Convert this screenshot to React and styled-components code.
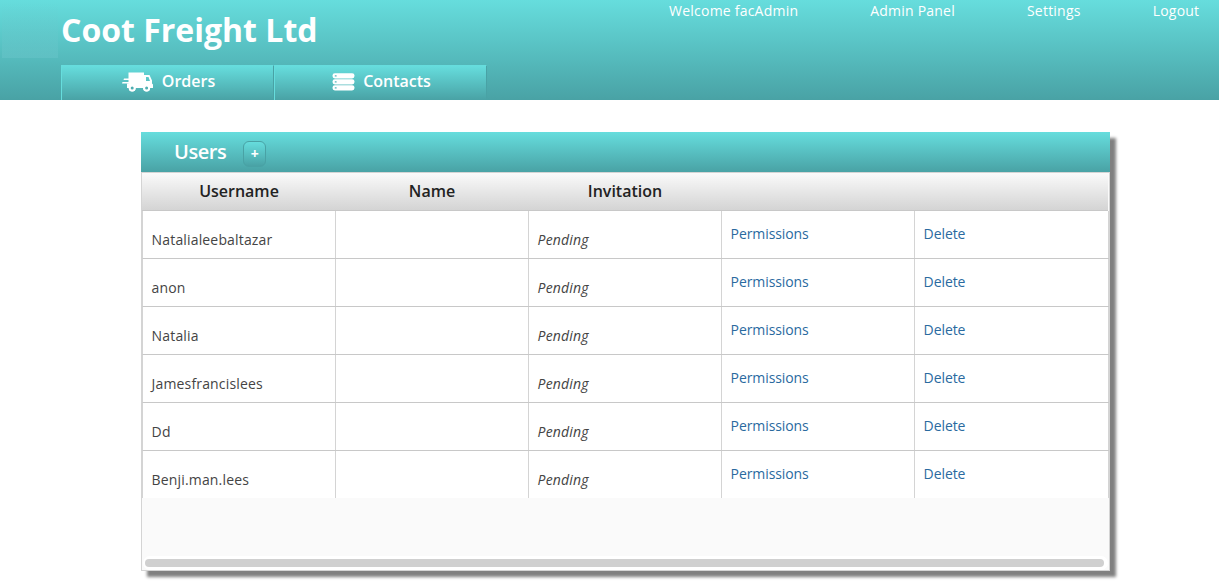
import React from "react";
import styled, { createGlobalStyle } from "styled-components";

const GlobalStyle = createGlobalStyle`
  * { box-sizing: border-box; }
  body {
    margin: 0;
    min-height: 100vh;
    background: #fff;
    color: #444;
    font: 14px/20px "Open Sans", sans-serif;
  }
`;

const teal = "linear-gradient(to bottom, #66dddd 0%, #49a2a5 100%)";

const Header = styled.header`
  display: flex;
  height: 100px;
  background: ${teal};
  color: #fff;
`;
const Logo = styled.div`
  width: 56px;
  height: 56px;
  margin: 2px 3px 0 2px;
  background: linear-gradient(to bottom, rgba(110, 200, 205, 0), rgba(110, 200, 205, 0.4));
`;
const Brand = styled.div`
  display: flex;
  flex-direction: column;
  justify-content: space-between;
`;
const Title = styled.h1`
  margin: 0;
  padding-top: 8px;
  font-size: 32px;
  line-height: 44px;
  font-weight: 700;
`;
const Tabs = styled.nav`
  display: flex;
  height: 35px;
`;
const Tab = styled.a`
  display: flex;
  align-items: center;
  justify-content: center;
  gap: 8px;
  width: 213px;
  padding: 0 0 3px 2px;
  border-top: 1px solid #66dddd;
  border-left: 1px solid #66dddd;
  border-right: 1px solid #49a2a5;
  background: ${teal};
  font-size: 16px;
  font-weight: 600;
`;
const TabLabel = styled.span`
  padding-bottom: 2px;
`;
const TopLinks = styled.nav`
  display: flex;
  gap: 72px;
  margin-left: auto;
  padding: 1px 19.7px 0 0;
  letter-spacing: 0.22px;
`;
const Panel = styled.section`
  display: flex;
  flex-direction: column;
  width: 969px;
  height: 439px;
  margin: 32px 0 0 141px;
  background: #fafafa;
  box-shadow: 6px 6px 3px #808080;
`;
const PanelBar = styled.div`
  display: flex;
  align-items: center;
  gap: 17px;
  height: 40px;
  padding-left: 33px;
  background: ${teal};
  color: #fff;
`;
const PanelTitle = styled.h2`
  margin: 0;
  font-size: 20px;
  line-height: 28px;
  font-weight: 600;
  letter-spacing: -0.45px;
`;
const AddButton = styled.button`
  width: 23px;
  height: 26px;
  margin-top: 4px;
  padding: 0;
  border: 1px solid #49a2a5;
  border-radius: 6px;
  background: ${teal};
  color: #fff;
  font: 700 14px/20px "Open Sans", sans-serif;
`;
const Grid = styled.div`
  display: flex;
  flex: 1;
  flex-direction: column;
  border: 1px solid #d4d4d4;
`;
const HeadRow = styled.div`
  display: grid;
  grid-template-columns: repeat(5, 193px);
  height: 38px;
  margin-right: 1px;
  padding-left: 0.5px;
  border-bottom: 1px solid #c8c8c8;
  background: linear-gradient(to bottom, #fafafa, #d4d4d4);
  color: #222;
  font-size: 16px;
  font-weight: 600;
  line-height: 36px;
  text-align: center;
`;
const Body = styled.div`
  height: 287px;
`;
const Row = styled.div`
  display: grid;
  grid-template-columns: repeat(4, 193px) 194px;
  height: 48px;
  border-left: 1px solid #d4d4d4;
  border-bottom: 1px solid #c8c8c8;
  background: #fff;
  &:last-of-type { border-bottom: 0; height: 47px; }
`;
const Cell = styled.div`
  padding: ${(p) => (p.$link ? 13 : 19)}px 8px 0 8.6px;
  border-right: 1px solid #d4d4d4;
  color: ${(p) => (p.$link ? "#2a6a9f" : "#444")};
  font-style: ${(p) => (p.$italic ? "italic" : "normal")};
  letter-spacing: ${(p) => (p.$link ? -0.09 : 0.16)}px;
`;
const ScrollTrack = styled.div`
  margin: auto 1px 0;
  padding: 3px 4px 3px 2px;
  border-radius: 7px;
  background: #fff;
`;
const ScrollThumb = styled.div`
  height: 8px;
  border-radius: 4px;
  background: #d0d0d0;
`;

const Truck = () => (
  <svg width="32" height="20" viewBox="0 0 32 20" fill="#fff">
    <path fillRule="evenodd" d="M6.500 0.500h15.500v2.500h5.500l2.500 5.500v3l1 1v3.500h-3a3.400 3.400 0 0 1-6.800 0H13.600a3.400 3.400 0 0 1-6.800 0H5V11.500h1.500zM24 5v4h4l-1.500-4z" />
    <path d="M2 6.500h6V8H1.500zM.5 10h7v1.500H0z" />
    <circle cx="10.200" cy="16" r="3.500" />
    <circle cx="24.600" cy="16" r="3.500" />
    <g fill="#4faeb1">
      <circle cx="10.200" cy="16" r="1.500" />
      <circle cx="24.600" cy="16" r="1.500" />
    </g>
  </svg>
);

const Stack = () => (
  <svg width="23" height="18" viewBox="0 0 23 18">
    {[0, 6, 12].map((y) => (
      <g key={y}>
        <rect x="0.500" y={y + 0.200} width="22" height="5.300" rx="2.400" fill="#fff" />
        <rect x="2.700" y={y + 2.200} width="2" height="1.200" rx="0.500" fill="#52b7b9" />
      </g>
    ))}
  </svg>
);

const users = ["Natalialeebaltazar", "anon", "Natalia", "Jamesfrancislees", "Dd", "Benji.man.lees"];

export default function App() {
  return (
    <>
      <GlobalStyle />
      <Header>
        <Logo />
        <Brand>
          <Title>Coot Freight Ltd</Title>
          <Tabs>
            <Tab><Truck /><TabLabel>Orders</TabLabel></Tab>
            <Tab><Stack /><TabLabel>Contacts</TabLabel></Tab>
          </Tabs>
        </Brand>
        <TopLinks>
          <span>Welcome facAdmin</span>
          <span>Admin Panel</span>
          <span>Settings</span>
          <span>Logout</span>
        </TopLinks>
      </Header>
      <Panel>
        <PanelBar>
          <PanelTitle>Users</PanelTitle>
          <AddButton>+</AddButton>
        </PanelBar>
        <Grid>
          <HeadRow>
            <span>Username</span>
            <span>Name</span>
            <span>Invitation</span>
          </HeadRow>
          <Body>
            {users.map((name) => (
              <Row key={name}>
                <Cell>{name}</Cell>
                <Cell />
                <Cell $italic>Pending</Cell>
                <Cell $link>Permissions</Cell>
                <Cell $link>Delete</Cell>
              </Row>
            ))}
          </Body>
          <ScrollTrack><ScrollThumb /></ScrollTrack>
        </Grid>
      </Panel>
    </>
  );
}
